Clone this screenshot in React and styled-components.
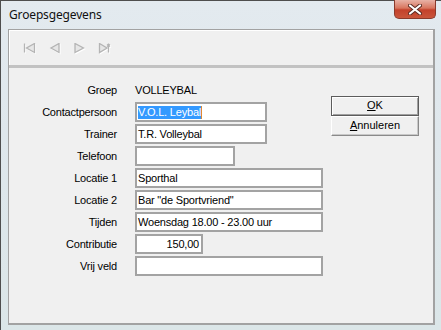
import React from 'react'
import styled, { createGlobalStyle } from 'styled-components'

const Global = createGlobalStyle`
  html, body { margin: 0; padding: 0; background: #dde6eb; }
  body { width: 441px; height: 330px; overflow: hidden; }
`;

const Window = styled.div`
  width: 441px;
  height: 330px;
  box-sizing: border-box;
  border-top: 1px solid #4e4e4e;
  border-left: 1px solid #4e4e4e;
  background: linear-gradient(180deg, #e3eaef 0%, #dfe7ec 40%, #dbe6e8 100%);
  display: flex;
  flex-direction: column;
  font-family: "Liberation Sans", Arial, sans-serif;
  font-size: 11px;
  color: #000;
`;

const TitleBar = styled.div`
  height: 28px;
  display: flex;
  align-items: flex-start;
  padding-left: 8px;
`;

const Title = styled.div`
  font-family: "Noto Sans", "Open Sans", sans-serif;
  font-size: 12px;
  letter-spacing: -0.15px;
  color: #111;
  line-height: 28px;
`;

const CloseButton = styled.div`
  margin-left: auto;
  margin-right: 5px;
  margin-top: -1px;
  width: 42px;
  height: 19px;
  box-sizing: border-box;
  border: 1px solid #8a3a2c;
  border-top: none;
  border-radius: 0 0 5px 5px;
  background: linear-gradient(180deg, #e8b2a6 0%, #d8765f 45%, #c3412b 55%, #c9553b 100%);
  display: flex;
  align-items: center;
  justify-content: center;
`;

const Client = styled.div`
  flex: 1;
  margin: 0 6px 5px 7px;
  border-top: 1px solid #a2a2a2;
  border-left: 1px solid #a2a2a2;
  border-right: 2px solid #a2a2a2;
  border-bottom: 2px solid #a2a2a2;
  background: #f0f0f0;
  display: flex;
  flex-direction: column;
`;

const Toolbar = styled.div`
  height: 38px;
  box-sizing: border-box;
  border-bottom: 3px solid #c2c2c2;
  box-shadow: inset 1px 1px 0 #ffffff;
  display: flex;
  align-items: center;
  padding-left: 14px;
  gap: 11px;
`;

const NavIcon = styled.svg`
  width: 14px;
  height: 12px;
  margin-top: 2px;
`;

const Body = styled.div`
  display: flex;
  align-items: flex-start;
  padding-top: 12px;
`;

const Fields = styled.div`
  display: grid;
  grid-template-columns: 108px auto;
  grid-auto-rows: 20px;
  column-gap: 18px;
  row-gap: 2px;
`;

const Label = styled.div`
  justify-self: end;
  align-self: center;
  white-space: nowrap;
  letter-spacing: -0.2px;
`;

const Value = styled.div`
  align-self: center;
  white-space: nowrap;
  letter-spacing: -0.2px;
`;

const Field = styled.div`
  width: ${p => p.$w}px;
  height: 20px;
  box-sizing: border-box;
  border: 2px solid #a3a3a3;
  background: #fff;
  padding: 0 2px 0 1px;
  line-height: 16px;
  white-space: nowrap;
  overflow: hidden;
  letter-spacing: -0.2px;
  text-align: ${p => (p.$right ? 'right' : 'left')};
`;

const Selected = styled.span`
  background: #3399ff;
  color: #fff;
  display: inline-block;
  line-height: 13px;
  border-right: 1px solid #e08a30;
`;

const Buttons = styled.div`
  margin-left: 8px;
  margin-top: 16px;
  display: flex;
  flex-direction: column;
`;

const Button = styled.div`
  width: 88px;
  height: 20px;
  box-sizing: border-box;
  background: #f0f0f0;
  text-align: center;
  line-height: 16px;
  border: 1px solid;
  border-color: ${p => (p.$default ? '#5c5c5c' : '#ffffff #8a8a8a #8a8a8a #ffffff')};
  box-shadow: ${p => (p.$default ? 'inset 1px 1px 0 #ffffff, inset -1px -1px 0 #a0a0a0' : 'inset -1px -1px 0 #c8c8c8')};
`;

const rows = [
  ['Contactpersoon', 132, 'sel'],
  ['Trainer', 132, 'T.R. Volleybal'],
  ['Telefoon', 100, ''],
  ['Locatie 1', 188, 'Sporthal'],
  ['Locatie 2', 188, 'Bar "de Sportvriend"'],
  ['Tijden', 188, 'Woensdag 18.00 - 23.00 uur'],
  ['Contributie', 68, '150,00'],
  ['Vrij veld', 188, ''],
];

function Icon({ children }) {
  return (
    <NavIcon viewBox="0 0 14 12">
      <g transform="translate(1 1)" fill="none" stroke="#ffffff" strokeWidth="1.2">{children}</g>
      <g fill="#e6e6e6" stroke="#b4b4b4" strokeWidth="1.3">{children}</g>
    </NavIcon>
  )
}

function App() {
  return (
    <Window>
      <Global />
      <TitleBar>
        <Title>Groepsgegevens</Title>
        <CloseButton>
          <svg width="14" height="11" viewBox="0 0 14 11">
            <path d="M2 1.5 L12 9.5 M12 1.5 L2 9.5" stroke="#5a2a22" strokeWidth="4" strokeLinecap="round" />
            <path d="M2 1.5 L12 9.5 M12 1.5 L2 9.5" stroke="#ffffff" strokeWidth="2.2" strokeLinecap="round" />
          </svg>
        </CloseButton>
      </TitleBar>
      <Client>
        <Toolbar>
          <Icon>
            <path d="M1.5 0.5 V9.5" />
            <path d="M11.5 0.5 L3.5 5 L11.5 9.5 Z" />
          </Icon>
          <Icon>
            <path d="M11 0.5 L3 5 L11 9.5 Z" />
          </Icon>
          <Icon>
            <path d="M2 0.5 L10.5 5 L2 9.5 Z" />
          </Icon>
          <Icon>
            <path d="M1.5 0.5 L9 5 L1.5 9.5 Z" />
            <path d="M10.5 0.5 V9.5 M9 1.5 L12 3.5 M12 1.5 L9 3.5" />
          </Icon>
        </Toolbar>
        <Body>
          <Fields>
            <Label>Groep</Label>
            <Value>VOLLEYBAL</Value>
            {rows.map(([label, w, text]) => (
              <React.Fragment key={label}>
                <Label>{label}</Label>
                <Field $w={w} $right={label === 'Contributie'}>
                  {text === 'sel' ? <Selected>V.O.L. Leybal</Selected> : text}
                </Field>
              </React.Fragment>
            ))}
          </Fields>
          <Buttons>
            <Button $default><u>O</u>K</Button>
            <Button><u>A</u>nnuleren</Button>
          </Buttons>
        </Body>
      </Client>
    </Window>
  )
}

export default App
